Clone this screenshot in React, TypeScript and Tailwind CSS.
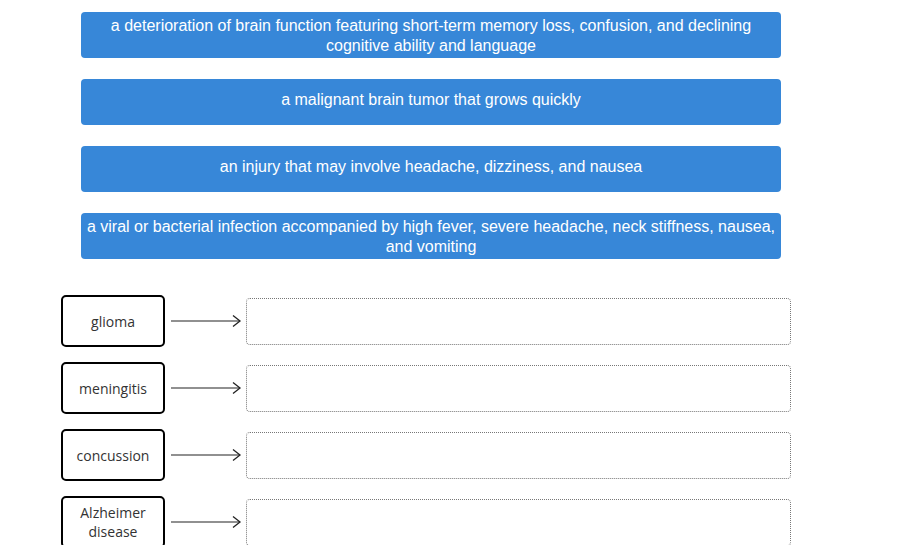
import React from 'react';

const definitions = [
  { text: 'a deterioration of brain function featuring short-term memory loss, confusion, and declining cognitive ability and language', twoLine: true },
  { text: 'a malignant brain tumor that grows quickly', twoLine: false },
  { text: 'an injury that may involve headache, dizziness, and nausea', twoLine: false },
  { text: 'a viral or bacterial infection accompanied by high fever, severe headache, neck stiffness, nausea, and vomiting', twoLine: true },
];

const terms = ['glioma', 'meningitis', 'concussion', 'Alzheimer disease'];

const Arrow: React.FC = () => (
  <svg width="72" height="14" viewBox="0 0 72 14" className="shrink-0">
    <line x1="1" y1="7" x2="70" y2="7" stroke="#222" strokeWidth="1.2" />
    <polyline points="63,1.5 70,7 63,12.5" fill="none" stroke="#222" strokeWidth="1.3" />
  </svg>
);

export default function App() {
  return (
    <div className="w-[897px] h-[545px] overflow-hidden bg-white">
      <div className="flex flex-col gap-[21px] pt-[12px] pl-[81px]">
        {definitions.map((d) => (
          <div
            key={d.text}
            className={`w-[700px] min-h-[46px] flex items-center justify-center rounded-[4px] bg-[#3787d8] px-[5px] text-center text-[16px] leading-[20px] text-white ${
              d.twoLine ? 'pt-[4px] pb-[2px]' : 'pt-[2px] pb-[7px]'
            }`}
            style={{ fontFamily: '"Liberation Sans", Arial, sans-serif' }}
          >
            {d.text}
          </div>
        ))}
      </div>
      <div className="flex flex-col gap-[15px] pt-[36px] pl-[61px]">
        {terms.map((t) => (
          <div key={t} className="flex items-center">
            <div
              className="w-[104px] h-[52px] flex items-center justify-center rounded-[5px] border-2 border-black px-1 text-center text-[14px] leading-[19px] text-[#333]"
              style={{ fontFamily: '"Open Sans", sans-serif' }}
            >
              {t}
            </div>
            <div className="ml-[5px] mr-[4px] flex items-center">
              <Arrow />
            </div>
            <div className="w-[545px] h-[47px] rounded-[4px] border border-dotted border-[#777]" />
          </div>
        ))}
      </div>
    </div>
  );
}
